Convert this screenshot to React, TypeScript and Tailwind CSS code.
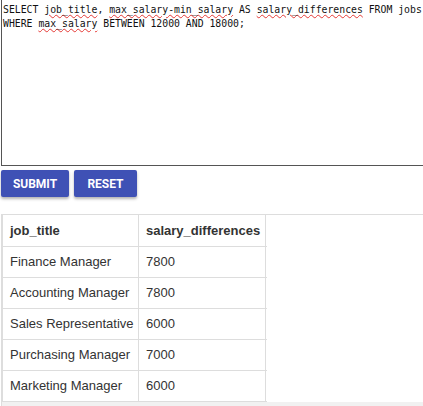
import React from "react";

const rows = [
  { title: "Finance Manager", diff: "7800" },
  { title: "Accounting Manager", diff: "7800" },
  { title: "Sales Representative", diff: "6000" },
  { title: "Purchasing Manager", diff: "7000" },
  { title: "Marketing Manager", diff: "6000" },
];

function Typo({ children }: { children: React.ReactNode }) {
  return (
    <span className="underline decoration-wavy decoration-[#e53935] decoration-1 underline-offset-[1px]">
      {children}
    </span>
  );
}

export default function App() {
  return (
    <div className="w-[423px] h-[406px] overflow-hidden bg-white">
      {/* Query editor */}
      <div className="ml-px h-[166px] border-l border-b border-[#555] pt-[3px] pl-px font-['DejaVu_Sans_Mono',monospace] text-[9.8px] leading-[14px] text-[#111]">
        <div className="whitespace-pre">
          SELECT <Typo>job_title</Typo>, <Typo>max_salary-min_salary</Typo> AS <Typo>salary_differences</Typo> FROM jobs
        </div>
        <div className="whitespace-pre">
          WHERE <Typo>max_salary</Typo> BETWEEN 12000 AND 18000;
        </div>
      </div>

      {/* Buttons */}
      <div className="mt-[4px] ml-px flex gap-[5px]">
        <button className="h-[27px] w-[68px] rounded-[2px] bg-[#3f51b5] font-['Roboto',sans-serif] text-[12px] font-bold text-white shadow-[0_2px_3px_rgba(0,0,0,0.3)]">
          SUBMIT
        </button>
        <button className="h-[27px] w-[63px] rounded-[2px] bg-[#3f51b5] font-['Roboto',sans-serif] text-[12px] font-bold text-white shadow-[0_2px_3px_rgba(0,0,0,0.3)]">
          RESET
        </button>
      </div>

      {/* Results */}
      <div className="mt-[17px] ml-px border-l border-t border-[#ddd] font-['Liberation_Sans',Arial,sans-serif] text-[13px] text-[#333]">
        <div className="flex h-[32px] w-[265px] border-b border-[#ddd] font-bold">
          <div className="flex w-[137px] items-center border-l border-r border-[#ddd] pl-[7px]">job_title</div>
          <div className="flex w-[127px] items-center border-r border-[#ddd] pl-[7px]">salary_differences</div>
        </div>
        {rows.map((r) => (
          <div key={r.title} className="flex h-[31px] w-[265px] border-b border-[#ddd]">
            <div className="flex w-[137px] items-center border-l border-r border-[#ddd] pl-[7px] whitespace-nowrap">{r.title}</div>
            <div className="flex w-[127px] items-center border-r border-[#ddd] pl-[7px]">{r.diff}</div>
          </div>
        ))}
        <div className="h-[6px] bg-[#f1f1f1]" />
      </div>
    </div>
  );
}
